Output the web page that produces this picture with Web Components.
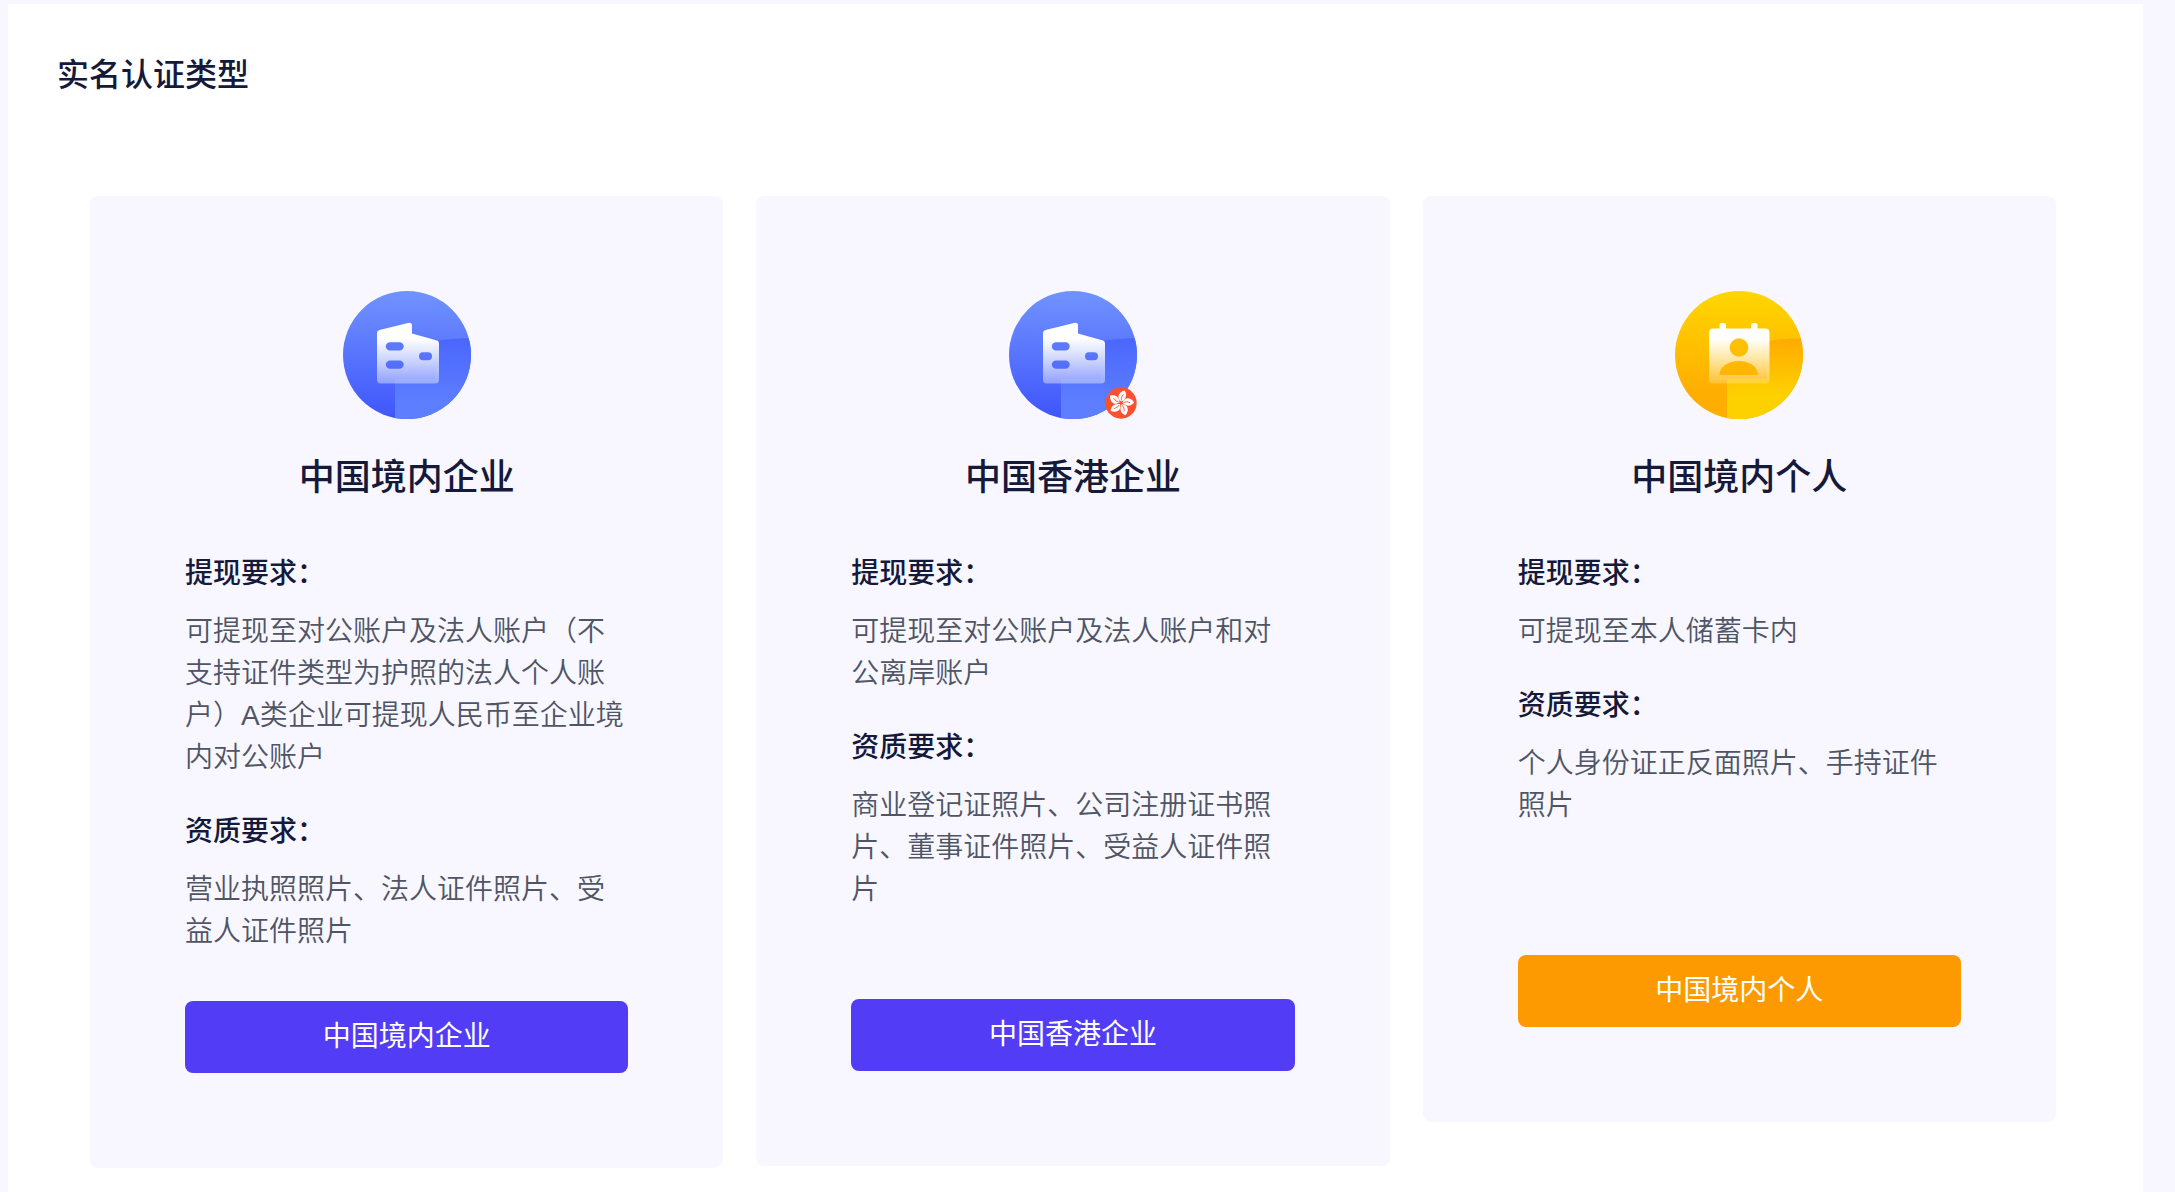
<!DOCTYPE html>
<html lang="zh-CN">
<head>
<meta charset="utf-8">
<meta name="viewport" content="width=device-width, initial-scale=1">
<title>实名认证类型</title>
<style>
  body {
    margin: 0;
    background: #f8f7ff;
    color: #15193a;
    font-family: "Liberation Sans", "Noto Sans CJK SC", sans-serif;
  }
</style>
</head>
<body>

<verify-panel>
  <span slot="heading">实名认证类型</span>

  <verify-card data-icon="company" data-name="中国境内企业">
    <verify-rule>
      <span slot="label">提现要求：</span>
      可提现至对公账户及法人账户（不支持证件类型为护照的法人个人账户）A类企业可提现人民币至企业境内对公账户
    </verify-rule>
    <verify-rule>
      <span slot="label">资质要求：</span>
      营业执照照片、法人证件照片、受益人证件照片
    </verify-rule>
  </verify-card>

  <verify-card data-icon="company-hk" data-name="中国香港企业" data-space="medium">
    <verify-rule>
      <span slot="label">提现要求：</span>
      可提现至对公账户及法人账户和对公离岸账户
    </verify-rule>
    <verify-rule>
      <span slot="label">资质要求：</span>
      商业登记证照片、公司注册证书照片、董事证件照片、受益人证件照片
    </verify-rule>
  </verify-card>

  <verify-card data-icon="person" data-name="中国境内个人" data-space="large">
    <verify-rule>
      <span slot="label">提现要求：</span>
      可提现至本人储蓄卡内
    </verify-rule>
    <verify-rule>
      <span slot="label">资质要求：</span>
      个人身份证正反面照片、手持证件照片
    </verify-rule>
  </verify-card>
</verify-panel>

<script>
const companyIcon = `
  <defs>
    <linearGradient id="bg" x1="0" y1="0" x2="0" y2="1">
      <stop offset="0" stop-color="#7193ff"/>
      <stop offset="1" stop-color="#3f55fb"/>
    </linearGradient>
    <linearGradient id="shade" x1="0" y1="0" x2="0" y2="1">
      <stop offset="0" stop-color="#4a66fd"/>
      <stop offset="0.8" stop-color="#5d7eff"/>
    </linearGradient>
    <linearGradient id="front" x1="0" y1="0" x2="0" y2="1">
      <stop offset="0.25" stop-color="#fff"/>
      <stop offset="1" stop-color="#fff" stop-opacity="0.38"/>
    </linearGradient>
    <clipPath id="round"><circle cx="64" cy="64" r="64"/></clipPath>
  </defs>
  <g clip-path="url(#round)">
    <rect width="128" height="128" fill="url(#bg)"/>
    <path d="M92 50Q104 48 128 47V128H52V88H92Z" fill="url(#shade)"/>
  </g>
  <path fill="url(#front)" fill-rule="evenodd" d="M34 42Q34 39.5 36.5 39L65 32Q69 31.2 69 34.5V42.5L94 49.5Q96 50.2 96 52.5V89Q96 92.5 92.5 92.5H37.5Q34 92.5 34 89Z
    M47 51.2a4.2 4.2 0 0 0 0 8.4h9.500a4.2 4.2 0 0 0 0-8.4Z
    M47 69.4a4.2 4.2 0 0 0 0 8.4h9.500a4.2 4.2 0 0 0 0-8.4Z
    M80 61.2a4 4 0 0 0 0 8h5a4 4 0 0 0 0-8Z"/>
`;

const petal = `<path d="M0-1.500C-5.200-4.400-4.600-10.200 1.800-13C5.200-9.200 4.600-4.600 0-1.500Z" fill="#fff"/>
  <path d="M0-2.500Q-1.200-5.800 1.200-9" fill="none" stroke="#f5502f" stroke-width="0.8"/>`;

const hkBadge = `
  <g transform="translate(112 112)">
    <circle r="15.7" fill="#f9502f"/>
    ${[8, 80, 152, 224, 296].map(a => `<g transform="rotate(${a})">${petal}</g>`).join("")}
  </g>
`;

const personIcon = `
  <defs>
    <linearGradient id="bg" x1="0" y1="0" x2="0" y2="1">
      <stop offset="0" stop-color="#ffd600"/>
      <stop offset="0.8" stop-color="#ffad00"/>
    </linearGradient>
    <linearGradient id="shade" x1="0" y1="0" x2="0" y2="1">
      <stop offset="0" stop-color="#ffab00"/>
      <stop offset="0.7" stop-color="#fdd000"/>
    </linearGradient>
    <linearGradient id="front" x1="0" y1="0" x2="0" y2="1">
      <stop offset="0.25" stop-color="#fff"/>
      <stop offset="1" stop-color="#fff" stop-opacity="0.2"/>
    </linearGradient>
    <clipPath id="round"><circle cx="64" cy="64" r="64"/></clipPath>
  </defs>
  <g clip-path="url(#round)">
    <rect width="128" height="128" fill="url(#bg)"/>
    <path d="M92 50Q104 48 128 47V128H52V88H92Z" fill="url(#shade)"/>
  </g>
  <path fill="url(#front)" fill-rule="evenodd" d="M38 37.5H44.5V34Q44.5 32 46.5 32H49Q51 32 51 34V37.5H76V34Q76 32 78 32H80.5Q82.5 32 82.5 34V37.5H90.5Q94.5 37.5 94.5 41.5V88.5Q94.5 92.5 90.5 92.5H38Q34 92.5 34 88.5V41.5Q34 37.5 38 37.5Z
    M64 47.2a9.3 9.3 0 1 0 0 18.6a9.3 9.3 0 1 0 0-18.6Z
    M44.5 84H83C83 75.5 74 70 64 70S44.5 75.5 44.5 84Z"/>
`;

const icons = {
  "company": companyIcon,
  "company-hk": companyIcon + hkBadge,
  "person": personIcon
};

const panelTemplate = document.createElement("template");
panelTemplate.innerHTML = `
<style>
  :host {
    display: block;
    box-sizing: border-box;
    min-height: 100vh;
    padding: 4px 32px 0 8px;
  }
  section {
    box-sizing: border-box;
    min-height: calc(100vh - 4px);
    padding: 47px 87px 24px 82px;
    background: #fff;
  }
  h1 {
    margin: 0 0 97px -33px;
    font-size: 32px;
    font-weight: 500;
    line-height: 48px;
  }
  .cards {
    display: grid;
    grid-template-columns: repeat(3, minmax(0, 1fr));
    align-items: start;
    gap: 33px;
  }
</style>
<section>
  <h1><slot name="heading"></slot></h1>
  <div class="cards"><slot></slot></div>
</section>
`;

class VerifyPanel extends HTMLElement {
  constructor() {
    super();
    this.attachShadow({mode: "open"});
    this.shadowRoot.appendChild(panelTemplate.content.cloneNode(true));
  }
}

const cardTemplate = document.createElement("template");
cardTemplate.innerHTML = `
<style>
  :host {
    --accent: #533cf5;
    --space: 48px;
    display: flex;
    flex-direction: column;
    padding: 95px;
    border-radius: 8px;
    background: #f8f7ff;
  }
  :host([data-icon="person"]) { --accent: #fd9a02; }
  :host([data-space="medium"]) { --space: 88px; }
  :host([data-space="large"]) { --space: 128px; }
  svg {
    display: block;
    align-self: center;
    width: 128px;
    height: 128px;
    overflow: visible;
  }
  h2 {
    margin: 32px 0 48px;
    font-size: 36px;
    font-weight: 500;
    line-height: 54px;
    text-align: center;
  }
  .rules {
    display: flex;
    flex-direction: column;
    gap: 32px;
  }
  button {
    width: 100%;
    height: 72px;
    margin: var(--space) 0 0;
    padding: 0;
    border: 0;
    border-radius: 8px;
    background: var(--accent);
    color: #fff;
    font: inherit;
    font-size: 28px;
    line-height: 42px;
    cursor: pointer;
  }
</style>
<svg viewBox="0 0 128 128" aria-hidden="true"></svg>
<h2></h2>
<div class="rules"><slot></slot></div>
<button type="button"></button>
`;

class VerifyCard extends HTMLElement {
  constructor() {
    super();
    this.attachShadow({mode: "open"});
    this.shadowRoot.appendChild(cardTemplate.content.cloneNode(true));
    this.svg = this.shadowRoot.querySelector("svg");
    this.h2 = this.shadowRoot.querySelector("h2");
    this.button = this.shadowRoot.querySelector("button");
  }
  connectedCallback() {
    this.render();
  }
  render() {
    this.svg.innerHTML = icons[this.dataset.icon] || "";
    this.h2.textContent = this.dataset.name;
    this.button.textContent = this.dataset.name;
  }
  static get observedAttributes() {
    return ["data-icon", "data-name"];
  }
  attributeChangedCallback() {
    this.render();
  }
}

const ruleTemplate = document.createElement("template");
ruleTemplate.innerHTML = `
<style>
  :host {
    display: block;
    font-size: 28px;
    line-height: 42px;
  }
  h3 {
    margin: 0 0 16px;
    font-size: 28px;
    font-weight: 500;
  }
  p {
    margin: 0;
    color: #4f5565;
    font-weight: 350;
  }
</style>
<h3><slot name="label"></slot></h3>
<p><slot></slot></p>
`;

class VerifyRule extends HTMLElement {
  constructor() {
    super();
    this.attachShadow({mode: "open"});
    this.shadowRoot.appendChild(ruleTemplate.content.cloneNode(true));
  }
}

customElements.define("verify-panel", VerifyPanel);
customElements.define("verify-card", VerifyCard);
customElements.define("verify-rule", VerifyRule);
</script>
</body>
</html>
